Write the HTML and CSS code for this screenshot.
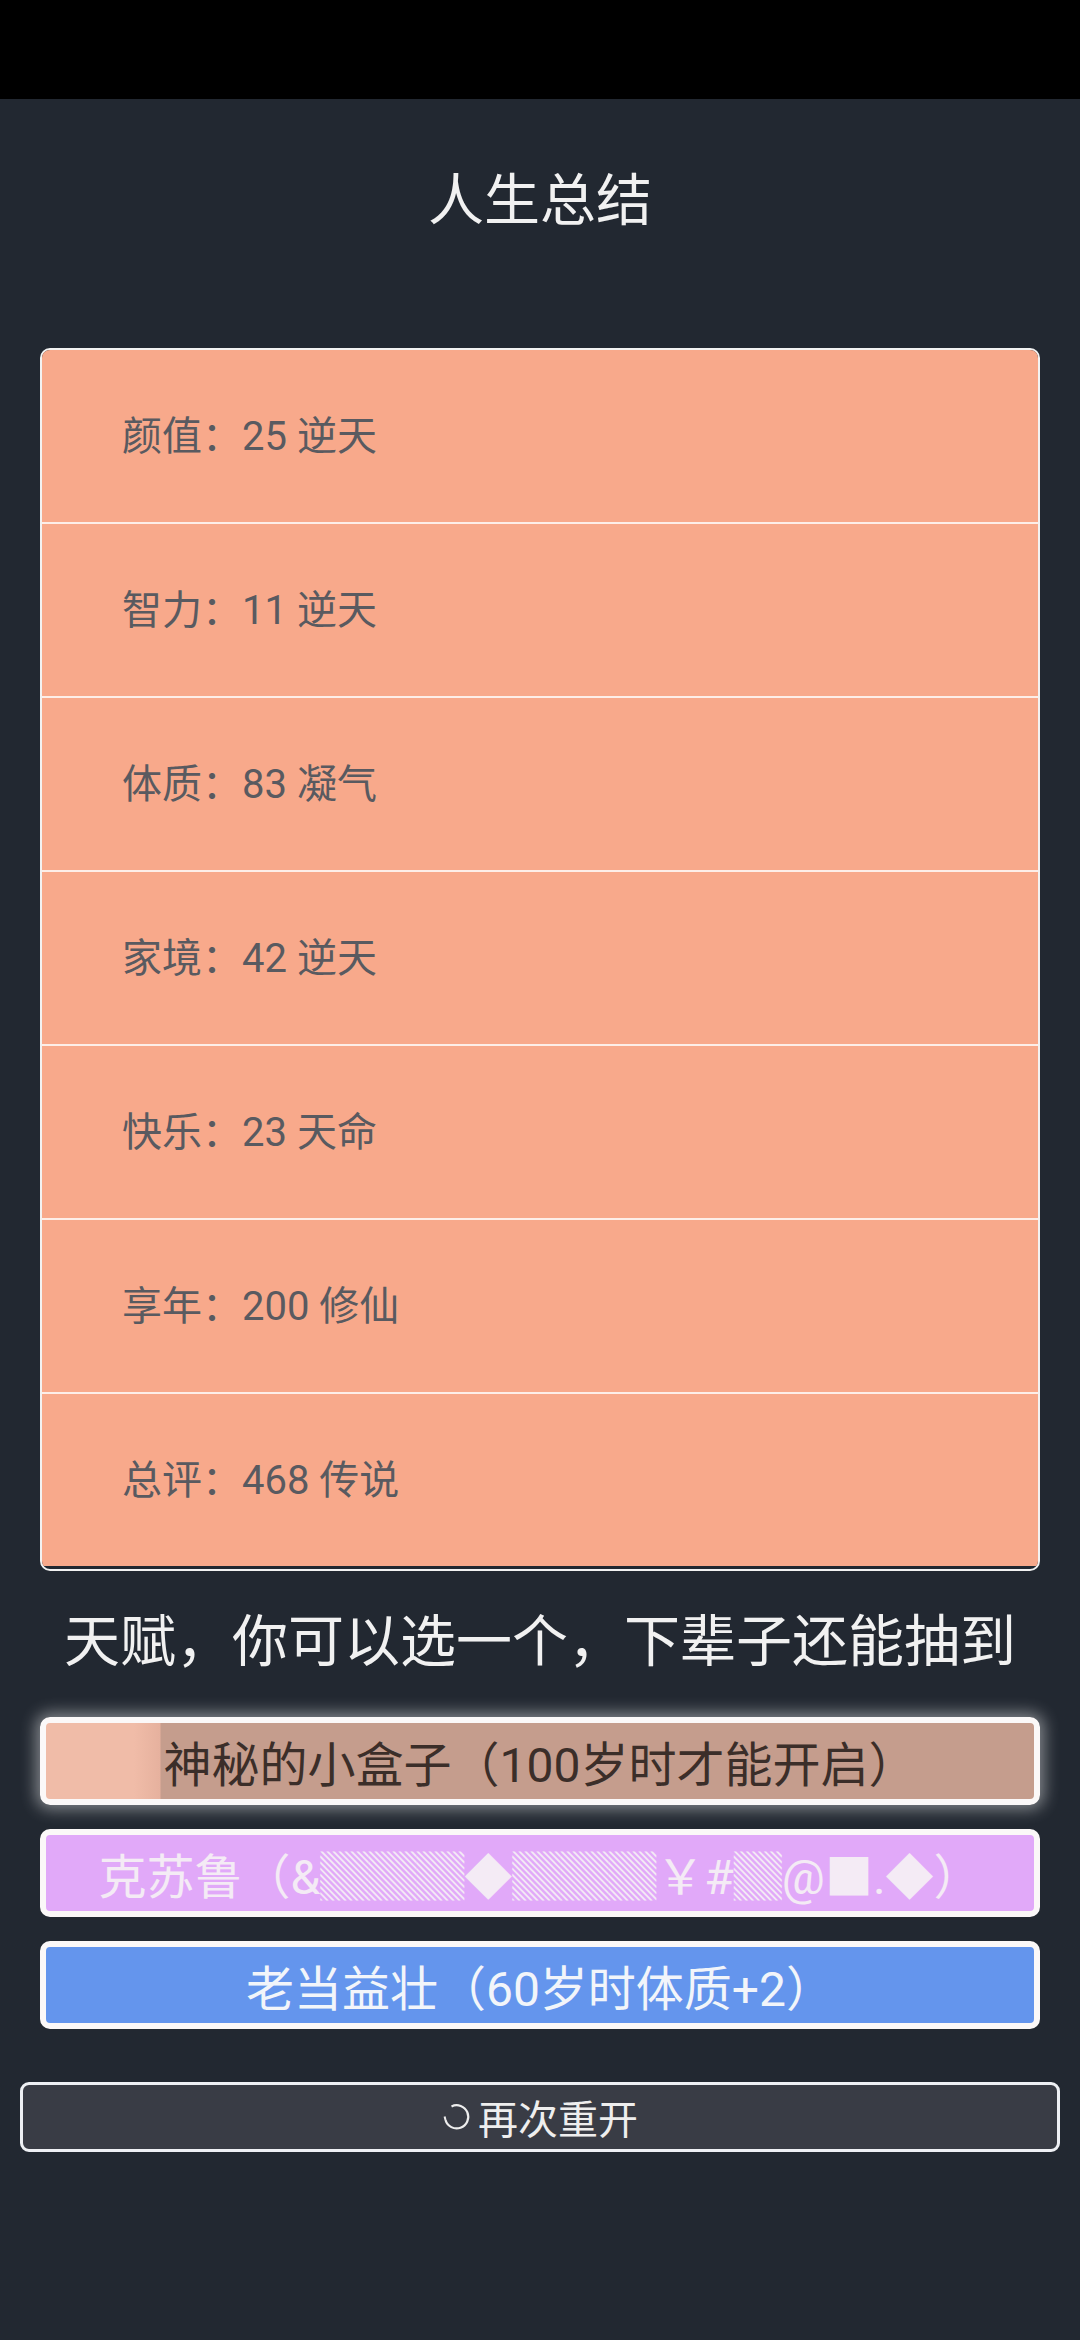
FILE: index.html
```html
<!doctype html>
<html lang="zh-CN">
<head>
    <meta charset="UTF-8">
    <meta name="viewport" content="width=device-width, initial-scale=1.0">
    <title>人生总结</title>
    <link rel="stylesheet" href="styles.css">
</head>
<body>
<div class="status-bar"></div>
<main class="summary">
    <h1 class="title">人生总结</h1>
    <ul class="props">
        <li>颜值：25 逆天</li>
        <li>智力：11 逆天</li>
        <li>体质：83 凝气</li>
        <li>家境：42 逆天</li>
        <li>快乐：23 天命</li>
        <li>享年：200 修仙</li>
        <li>总评：468 传说</li>
    </ul>
    <h2 class="hint">天赋，你可以选一个，下辈子还能抽到</h2>
    <ul class="talents">
        <li class="talent mystery selected">神秘的小盒子（100岁时才能开启）</li>
        <li class="talent cthulhu">克苏鲁（&amp;▓▓▓◆▓▓▓￥#▓@■.◆）</li>
        <li class="talent blue">老当益壮（60岁时体质+2）</li>
    </ul>
    <button class="restart">
        <svg class="restart-icon" viewBox="0 0 30 30" width="30" height="30">
            <path d="M9.5 4.4 A11.6 11.6 0 1 1 3.5 18" fill="none" stroke="#eeeeee" stroke-width="2.2"/>
            <path d="M3.5 18 L2.6 14.6" fill="none" stroke="#eeeeee" stroke-width="2"/>
        </svg>再次重开
    </button>
</main>
</body>
</html>
```

FILE: styles.css
```css
* {
    box-sizing: border-box;
}

body {
    margin: 0;
    background: #222831;
    font-family: Roboto, "Noto Sans CJK SC", sans-serif;
}

.status-bar {
    height: 99px;
    background: #000;
}

.summary {
    padding: 0 20px 60px;
}

.title {
    margin: 60px 0 105px;
    font-size: 56px;
    line-height: 84px;
    font-weight: normal;
    text-align: center;
    color: #f1f1f1;
}

.props {
    list-style: none;
    margin: 0 20px;
    padding: 0 0 3px;
    border: 2px solid #f2f2f2;
    border-radius: 10px;
    overflow: hidden;
}

.props li {
    height: 174px;
    display: flex;
    align-items: center;
    padding: 0 0 7px 80px;
    background: #f8a98b;
    border-top: 2px solid #fdeee8;
    font-size: 40px;
    color: #595a60;
}

.props li:first-child {
    height: 172px;
    border-top: none;
}

.hint {
    margin: 29px 0 0;
    font-size: 56px;
    line-height: 84px;
    font-weight: normal;
    text-align: center;
    color: #f1f1f1;
}

.talents {
    list-style: none;
    margin: 33px 20px 0;
    padding: 0;
    display: flex;
    flex-direction: column;
    gap: 24px;
}

.talent {
    height: 88px;
    display: flex;
    align-items: center;
    justify-content: center;
    border: 6px solid #fbf8f8;
    border-radius: 10px;
    font-size: 48px;
    white-space: nowrap;
}

.mystery {
    background: linear-gradient(to right, #f0bca8 0, #f0bca8 88px, #e6b19e 114px, #c59d8d 115px);
    color: #3b2e29;
}

.selected {
    box-shadow: 0 0 16px 4px rgba(255, 255, 255, 0.45);
}

.cthulhu {
    background: #e1a9f9;
    color: #f4ebf5;
}

.blue {
    background: #6495ed;
    color: #f2f5fa;
}

.restart {
    margin-top: 53px;
    width: 100%;
    height: 70px;
    display: flex;
    align-items: center;
    justify-content: center;
    background: #393c45;
    border: 3px solid #eef0f4;
    border-radius: 9px;
    font-family: inherit;
    font-size: 40px;
    color: #eeeeee;
    padding: 0;
}

.restart-icon {
    margin-right: 6px;
}
```
